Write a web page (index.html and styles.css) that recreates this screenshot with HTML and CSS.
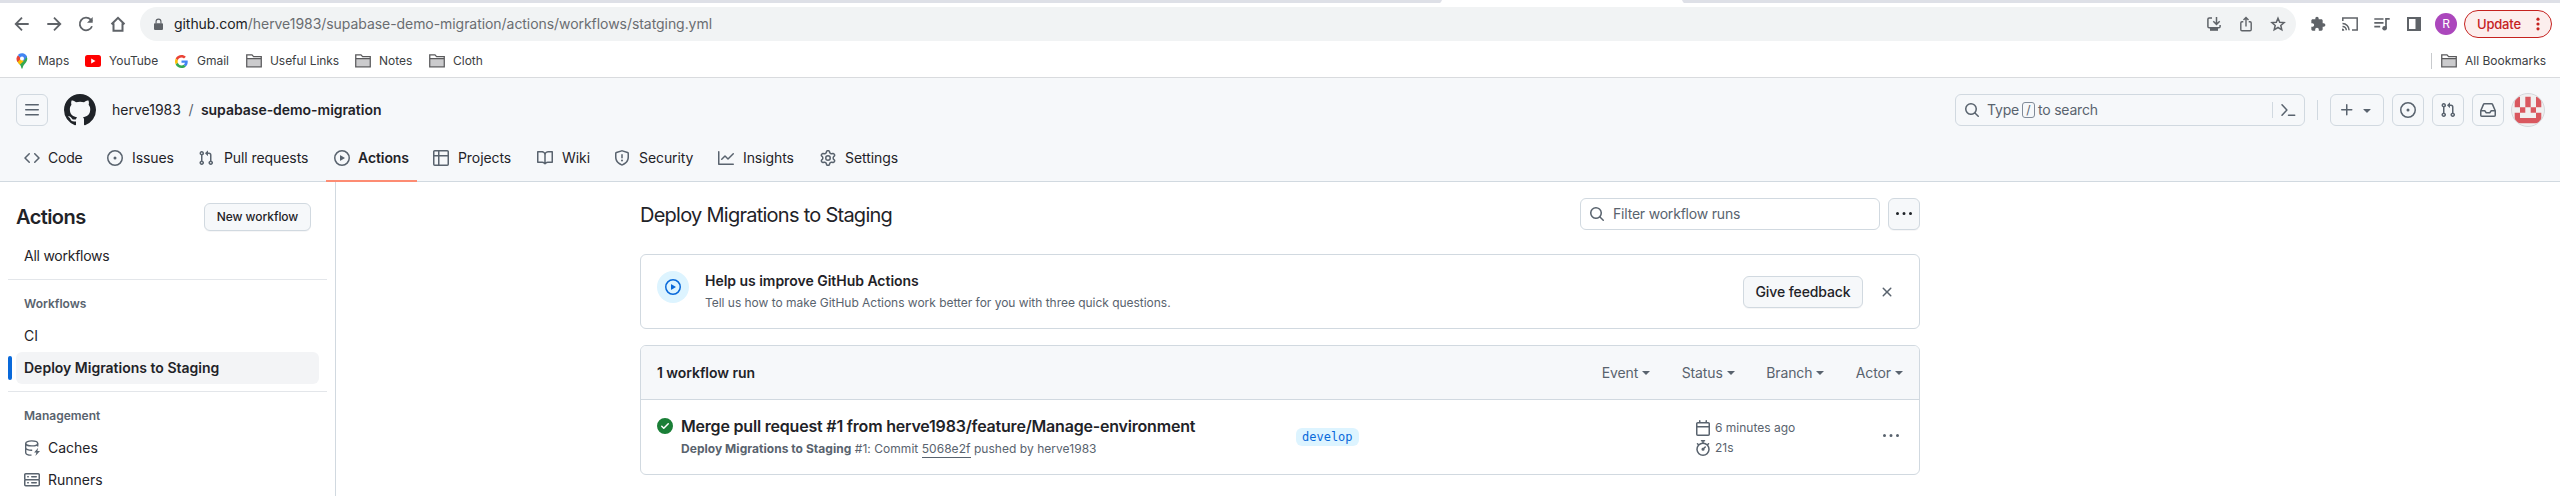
FILE: index.html
```
<!DOCTYPE html>
<html lang="en">
<head>
<meta charset="utf-8">
<title>Deploy Migrations to Staging · Workflow runs</title>
<link rel="stylesheet" href="styles.css">
</head>
<body>
<svg class="sprite" aria-hidden="true">
  <symbol id="issue" viewBox="0 0 16 16"><path d="M8 9.5a1.5 1.5 0 1 0 0-3 1.5 1.5 0 0 0 0 3Z"/><path d="M8 0a8 8 0 1 1 0 16A8 8 0 0 1 8 0ZM1.5 8a6.5 6.5 0 1 0 13 0 6.5 6.5 0 0 0-13 0Z"/></symbol>
  <symbol id="pull" viewBox="0 0 16 16"><path d="M1.5 3.25a2.25 2.25 0 1 1 3 2.122v5.256a2.251 2.251 0 1 1-1.5 0V5.372A2.25 2.25 0 0 1 1.5 3.25Zm5.677-.177L9.573.677A.25.25 0 0 1 10 .854V2.5h1A2.5 2.5 0 0 1 13.5 5v5.628a2.251 2.251 0 1 1-1.5 0V5a1 1 0 0 0-1-1h-1v1.646a.25.25 0 0 1-.427.177L7.177 3.427a.25.25 0 0 1 0-.354ZM3.75 2.5a.75.75 0 1 0 0 1.5.75.75 0 0 0 0-1.5Zm0 9.5a.75.75 0 1 0 0 1.5.75.75 0 0 0 0-1.5Zm8.25.75a.75.75 0 1 0 1.5 0 .75.75 0 0 0-1.5 0Z"/></symbol>
  <symbol id="play" viewBox="0 0 16 16"><path d="M8 0a8 8 0 1 1 0 16A8 8 0 0 1 8 0ZM1.5 8a6.5 6.5 0 1 0 13 0 6.5 6.5 0 0 0-13 0Zm4.879-2.773 4.264 2.559a.25.25 0 0 1 0 .428l-4.264 2.559A.25.25 0 0 1 6 10.559V5.442a.25.25 0 0 1 .379-.215Z"/></symbol>
  <symbol id="search" viewBox="0 0 16 16"><path d="M10.68 11.74a6 6 0 0 1-7.922-8.982 6 6 0 0 1 8.982 7.922l3.04 3.04a.749.749 0 0 1-.326 1.275.749.749 0 0 1-.734-.215ZM11.5 7a4.499 4.499 0 1 0-8.997 0A4.499 4.499 0 0 0 11.5 7Z"/></symbol>
  <symbol id="caret" viewBox="0 0 16 16"><path d="m4.427 7.427 3.396 3.396a.25.25 0 0 0 .354 0l3.396-3.396A.25.25 0 0 0 11.396 7H4.604a.25.25 0 0 0-.177.427Z"/></symbol>
  <symbol id="kebab" viewBox="0 0 16 16"><path d="M8 9a1.5 1.5 0 1 0 0-3 1.5 1.5 0 0 0 0 3ZM1.5 9a1.5 1.5 0 1 0 0-3 1.5 1.5 0 0 0 0 3Zm13 0a1.5 1.5 0 1 0 0-3 1.5 1.5 0 0 0 0 3Z"/></symbol>
  <symbol id="folder" viewBox="0 0 16 14"><path d="M1.2 4.5h13.6v8H1.200Z" fill="#cbcbcd"/><path d="M.75 12.9V.9H6l1.600 1.700h7.650V12.900ZM.8 4.600h14.400" fill="none" stroke="#5a5a5c" stroke-width="1.300"/></symbol>
</svg>

<div class="tabstrip"><span class="active-tab"></span></div>

<div class="toolbar">
  <svg class="nav-ico" viewBox="0 0 16 16"><path d="M14.700 8H2M8 1.700 1.700 8 8 14.300"/></svg>
  <svg class="nav-ico" viewBox="0 0 16 16"><path d="M1.300 8H14M8 1.700 14.300 8 8 14.300"/></svg>
  <svg class="nav-ico" viewBox="0 0 16 16"><path d="M14 10.200A6.300 6.300 0 1 1 12.700 3.700L14 5.300"/><path d="M14.700 1v5.700H9Z" class="solid"/></svg>
  <svg class="nav-ico" viewBox="0 0 16 16"><path d="M1.500 8.300 8 1.800l6.500 6.500M3.500 7.300v7.500h9V7.300" stroke-width="2"/></svg>
  <div class="omnibox">
    <svg class="lock" viewBox="0 0 10 14"><path d="M1 5.500h8a1 1 0 0 1 1 1V12a1.200 1.200 0 0 1-1.200 1.200H1.200A1.200 1.200 0 0 1 0 12V6.500a1 1 0 0 1 1-1Z"/><path d="M2.300 6V3.700a2.700 2.700 0 0 1 5.400 0V6" fill="none" stroke="#5f6368" stroke-width="1.300"/></svg>
    <span class="url"><b>github.com</b>/herve1983/supabase-demo-migration/actions/workflows/statging.yml</span>
    <svg class="omni-ico" viewBox="0 0 16 16"><path d="M6 2H3.200Q1.900 2 1.900 3.300v7.200q0 1.300 1.300 1.300h9.600q1.300 0 1.300-1.300V9M10.500 1v6.800M7.300 5.300l3.200 3.200 3.200-3.200" stroke-width="1.500"/><path d="M4 12h8v2.800H4Z" class="solid"/></svg>
    <svg class="omni-ico" viewBox="0 0 16 16"><path d="M5.300 5.800H4q-1.200 0-1.200 1.200v6.500q0 1.200 1.200 1.200h8q1.200 0 1.200-1.200V7q0-1.200-1.200-1.200h-1.300M8 10.500V1.800M5.500 4 8 1.500 10.500 4" stroke-width="1.400"/></svg>
    <svg class="omni-ico" viewBox="0 0 16 16"><path d="m8 2.200 1.700 4 4.400.400-3.300 2.900 1 4.300L8 11.500l-3.800 2.300 1-4.300-3.300-2.900 4.400-.400Z" stroke-width="1.500"/></svg>
  </div>
  <svg class="ext" viewBox="0 0 24 24"><path d="M20.500 11H19V7c0-1.100-.9-2-2-2h-4V3.500C13 2.120 11.880 1 10.500 1S8 2.120 8 3.500V5H4c-1.100 0-1.990.9-1.990 2v3.800H3.500c1.490 0 2.700 1.210 2.700 2.700s-1.210 2.700-2.700 2.700H2V20c0 1.100.9 2 2 2h3.800v-1.500c0-1.490 1.210-2.700 2.700-2.700 1.490 0 2.700 1.210 2.700 2.700V22H17c1.100 0 2-.9 2-2v-4h1.500c1.380 0 2.500-1.120 2.500-2.500S21.880 11 20.500 11z"/></svg>
  <svg class="ext" viewBox="0 0 16 16"><path d="M.8 5V2h14.400v12H10M.5 7.600a6.600 6.600 0 0 1 6.600 6.600M.5 10.400a3.800 3.800 0 0 1 3.800 3.800" fill="none" stroke="#5f6368" stroke-width="1.500"/><path d="M0 12.500a2.300 2.300 0 0 1 2.300 2.300H0Z"/></svg>
  <svg class="ext" viewBox="0 0 16 16"><path d="M.3 3h9.200M.3 6.800h9.200M.3 10.600h5.900M12 12.300V2.800h3.700" fill="none" stroke="#5f6368" stroke-width="1.700"/><circle cx="10.600" cy="12.200" r="2.300"/></svg>
  <svg class="ext" viewBox="0 0 16 16"><path fill-rule="evenodd" d="M1 1h14v14H1ZM3 3v10h6.500V3Z"/></svg>
  <span class="profile">R</span>
  <span class="update"><span>Update</span><svg viewBox="0 0 4 14"><circle cx="2" cy="2.200" r="1.600"/><circle cx="2" cy="7" r="1.600"/><circle cx="2" cy="11.800" r="1.600"/></svg></span>
</div>

<div class="bookmarks">
  <a class="bm bm-maps"><svg viewBox="0 0 16 16" width="16" height="16"><path fill="#34a853" d="M3.300 8.500C5 11 7 12 7.300 14.700c.2 1.500 1.200 1.500 1.400 0C9 11.500 13.300 9.500 13.300 5.400L12.600 3Z"/><path fill="#fbbc04" d="m3.300 8.500 3-4 4 3-4.500 4.300C5 10.900 4 9.800 3.300 8.500Z"/><path fill="#ea4335" d="M4 2.200 7.500 5 3.500 9A5.600 5.600 0 0 1 4 2.200Z"/><path fill="#4285f4" d="M4 2.100A5.300 5.300 0 0 1 13 3.800L9.500 8 6.300 5Z"/><circle cx="8" cy="5.500" r="2" fill="#fff"/></svg><span>Maps</span></a>
  <a class="bm bm-yt"><svg viewBox="0 0 16 12" width="16" height="12"><rect width="16" height="12" rx="2.500" fill="#f00"/><path fill="#fff" d="m6.200 3.500 4.300 2.500-4.300 2.500Z"/></svg><span>YouTube</span></a>
  <a class="bm bm-gmail"><svg viewBox="0 0 48 48" width="13" height="13"><path fill="#EA4335" d="M24 9.500c3.540 0 6.710 1.220 9.210 3.600l6.850-6.850C35.900 2.380 30.470 0 24 0 14.620 0 6.510 5.380 2.560 13.220l7.980 6.190C12.430 13.720 17.740 9.500 24 9.500z"/><path fill="#4285F4" d="M46.980 24.550c0-1.570-.15-3.090-.38-4.550H24v9.020h12.940c-.58 2.960-2.260 5.480-4.780 7.180l7.730 6c4.510-4.180 7.090-10.360 7.090-17.650z"/><path fill="#FBBC05" d="M10.530 28.590c-.48-1.450-.76-2.990-.76-4.590s.27-3.140.76-4.590l-7.980-6.190C.92 16.460 0 20.120 0 24c0 3.880.92 7.540 2.560 10.780l7.970-6.190z"/><path fill="#34A853" d="M24 48c6.480 0 11.930-2.130 15.890-5.810l-7.730-6c-2.150 1.450-4.920 2.300-8.160 2.300-6.260 0-11.570-4.220-13.470-9.910l-7.980 6.190C6.510 42.620 14.620 48 24 48z"/></svg><span>Gmail</span></a>
  <a class="bm bm-links"><svg width="16" height="14"><use href="#folder"/></svg><span>Useful Links</span></a>
  <a class="bm bm-notes"><svg width="16" height="14"><use href="#folder"/></svg><span>Notes</span></a>
  <a class="bm bm-cloth"><svg width="16" height="14"><use href="#folder"/></svg><span>Cloth</span></a>
  <a class="bm bm-all"><svg width="16" height="14"><use href="#folder"/></svg><span>All Bookmarks</span></a>
</div>

<header class="gh-header">
  <div class="gh-top">
    <span class="btn-sq"><svg class="oct" viewBox="0 0 16 16"><path d="M1 2.750A.75.75 0 0 1 1.750 2h12.500a.75.75 0 0 1 0 1.500H1.750A.75.75 0 0 1 1 2.750Zm0 5A.75.75 0 0 1 1.750 7h12.500a.75.75 0 0 1 0 1.500H1.750A.75.75 0 0 1 1 7.750ZM1.750 12h12.500a.75.75 0 0 1 0 1.500H1.750a.75.75 0 0 1 0-1.500Z"/></svg></span>
    <svg class="mark" viewBox="0 0 16 16"><path d="M8 0c4.420 0 8 3.580 8 8a8.013 8.013 0 0 1-5.450 7.590c-.4.080-.55-.17-.55-.38 0-.27.010-1.130.010-2.200 0-.75-.25-1.230-.54-1.480 1.780-.2 3.650-.88 3.650-3.950 0-.88-.31-1.590-.82-2.150.080-.2.360-1.020-.080-2.120 0 0-.67-.22-2.200.82-.64-.18-1.320-.27-2-.27-.68 0-1.360.090-2 .27-1.530-1.030-2.200-.82-2.200-.82-.44 1.100-.16 1.920-.080 2.120-.51.560-.82 1.280-.82 2.150 0 3.060 1.860 3.750 3.640 3.950-.23.2-.44.550-.51 1.070-.46.210-1.610.550-2.330-.66-.15-.24-.6-.83-1.230-.82-.67.010-.27.380.010.530.340.190.730.9.820 1.130.160.450.680 1.310 2.690.940 0 .670.010 1.300.010 1.490 0 .210-.15.450-.55.380A7.995 7.995 0 0 1 0 8c0-4.420 3.580-8 8-8Z"/></svg>
    <span class="owner">herve1983</span><span class="slash">/</span><span class="repo">supabase-demo-migration</span>
    <div class="gh-search">
      <svg class="oct"><use href="#search"/></svg>
      <span class="hint">Type</span><kbd>/</kbd><span class="hint">to search</span>
      <span class="cmd"><svg class="oct" viewBox="0 0 16 16"><path d="M2 2.700 6.900 8 2 13.300M8.500 13.200h6.200" fill="none" stroke="#59636e" stroke-width="1.500" stroke-linecap="round" stroke-linejoin="round"/></svg></span>
    </div>
    <span class="vline"></span>
    <span class="btn-sq plus"><svg class="oct" viewBox="0 0 16 16"><path d="M7.750 2a.75.75 0 0 1 .75.75V7h4.250a.75.75 0 0 1 0 1.500H8.500v4.250a.75.75 0 0 1-1.500 0V8.500H2.750a.75.75 0 0 1 0-1.500H7V2.750A.75.75 0 0 1 7.750 2Z"/></svg><svg class="oct"><use href="#caret"/></svg></span>
    <span class="btn-sq"><svg class="oct"><use href="#issue"/></svg></span>
    <span class="btn-sq"><svg class="oct"><use href="#pull"/></svg></span>
    <span class="btn-sq"><svg class="oct" viewBox="0 0 16 16"><path d="M2.800 2.060A1.750 1.750 0 0 1 4.410 1h7.180c.7 0 1.333.417 1.610 1.060l2.740 6.395c.04.093.060.194.060.295v4.500A1.750 1.750 0 0 1 14.250 15H1.750A1.750 1.750 0 0 1 0 13.250v-4.500c0-.101.020-.202.060-.295Zm1.610.44a.25.25 0 0 0-.23.152L1.887 8H4.750a.75.75 0 0 1 .6.300L6.625 10h2.750l1.275-1.700a.75.75 0 0 1 .6-.300h2.863L11.820 2.652a.25.25 0 0 0-.23-.152Zm10.090 7h-2.875l-1.275 1.700a.75.75 0 0 1-.6.300h-3.500a.75.75 0 0 1-.6-.300L4.375 9.500H1.500v3.750c0 .138.112.25.25.25h12.500a.25.25 0 0 0 .25-.25Z"/></svg></span>
    <svg class="avatar" viewBox="0 0 34 34"><circle cx="17" cy="17" r="16.500" fill="#f0f0f0" stroke="#d5d8dc"/><clipPath id="round"><circle cx="17" cy="17" r="16"/></clipPath><path clip-path="url(#round)" fill="#d9585f" d="M3.700 3.700H9v10.600H3.700ZM14.300 3.700h5.400v10.600h-5.400ZM25 3.700h5.300v10.600H25ZM9 14.300h5.300v5.400H9ZM19.700 14.300H25v5.400h-5.300ZM3.700 19.700H9V25h16v-5.300h5.300v10.600H3.700Z"/></svg>
  </div>
  <nav class="gh-nav">
    <a class="w-code"><svg class="oct" viewBox="0 0 16 16"><path d="m11.280 3.220 4.250 4.250a.75.75 0 0 1 0 1.060l-4.250 4.250a.749.749 0 0 1-1.275-.326.749.749 0 0 1 .215-.734L13.940 8l-3.720-3.720a.749.749 0 0 1 .326-1.275.749.749 0 0 1 .734.215Zm-6.560 0a.751.751 0 0 1 1.042.018.751.751 0 0 1 .018 1.042L2.060 8l3.720 3.720a.749.749 0 0 1-.326 1.275.749.749 0 0 1-.734-.215L.47 8.530a.75.75 0 0 1 0-1.060Z"/></svg><span>Code</span></a>
    <a class="w-issues"><svg class="oct"><use href="#issue"/></svg><span>Issues</span></a>
    <a class="w-pulls"><svg class="oct"><use href="#pull"/></svg><span>Pull requests</span></a>
    <a class="w-actions current"><svg class="oct"><use href="#play"/></svg><span>Actions</span></a>
    <a class="w-projects"><svg class="oct" viewBox="0 0 16 16"><path d="M0 1.750C0 .784.784 0 1.750 0h12.500C15.216 0 16 .784 16 1.750v12.500A1.750 1.750 0 0 1 14.250 16H1.750A1.750 1.750 0 0 1 0 14.250ZM6.500 6.500v8h7.750a.25.25 0 0 0 .25-.25V6.500Zm8-1.500V1.750a.25.25 0 0 0-.25-.25H6.500V5Zm-13 1.500v7.750c0 .138.112.25.25.25H5v-8ZM5 5V1.500H1.750a.25.25 0 0 0-.25.25V5Z"/></svg><span>Projects</span></a>
    <a class="w-wiki"><svg class="oct" viewBox="0 0 16 16"><path d="M0 1.750A.75.75 0 0 1 .75 1h4.253c1.227 0 2.317.590 3 1.501A3.743 3.743 0 0 1 11.006 1h4.245a.75.75 0 0 1 .75.75v10.500a.75.75 0 0 1-.75.75h-4.507a2.250 2.250 0 0 0-1.591.659l-.622.621a.75.75 0 0 1-1.060 0l-.622-.621A2.250 2.250 0 0 0 5.258 13H.75a.75.75 0 0 1-.75-.75Zm7.251 10.324.004-5.073-.002-2.253A2.250 2.250 0 0 0 5.003 2.500H1.500v9h3.757a3.750 3.750 0 0 1 1.994.574ZM8.755 4.750l-.004 7.322a3.752 3.752 0 0 1 1.992-.572H14.500v-9h-3.495a2.250 2.250 0 0 0-2.250 2.250Z"/></svg><span>Wiki</span></a>
    <a class="w-security"><svg class="oct" viewBox="0 0 16 16"><path d="M7.467.133a1.748 1.748 0 0 1 1.066 0l5.250 1.680A1.750 1.750 0 0 1 15 3.480V7c0 1.566-.32 3.182-1.303 4.682-.983 1.498-2.585 2.813-5.032 3.855a1.697 1.697 0 0 1-1.330 0c-2.447-1.042-4.049-2.357-5.032-3.855C1.320 10.182 1 8.566 1 7V3.480a1.750 1.750 0 0 1 1.217-1.667Zm.610 1.429a.25.25 0 0 0-.153 0l-5.250 1.680a.25.25 0 0 0-.174.238V7c0 1.358.275 2.666 1.057 3.860.784 1.194 2.121 2.340 4.366 3.297a.196.196 0 0 0 .154 0c2.245-.956 3.582-2.104 4.366-3.298C13.225 9.666 13.500 8.360 13.500 7V3.480a.251.251 0 0 0-.174-.237l-5.250-1.680ZM8.750 4.750v3a.75.75 0 0 1-1.500 0v-3a.75.75 0 0 1 1.500 0ZM9 10.500a1 1 0 1 1-2 0 1 1 0 0 1 2 0Z"/></svg><span>Security</span></a>
    <a class="w-insights"><svg class="oct" viewBox="0 0 16 16"><path d="M1.500 1.750V13.500h13.750a.75.75 0 0 1 0 1.500H.75a.75.75 0 0 1-.75-.75V1.750a.75.75 0 0 1 1.500 0Zm14.280 2.530-5.250 5.250a.75.75 0 0 1-1.060 0L7 7.060 4.280 9.780a.751.751 0 0 1-1.042-.018.751.751 0 0 1-.018-1.042l3.250-3.250a.75.75 0 0 1 1.060 0L10 7.940l4.720-4.720a.751.751 0 0 1 1.042.018.751.751 0 0 1 .018 1.042Z"/></svg><span>Insights</span></a>
    <a class="w-settings"><svg class="oct" viewBox="0 0 16 16"><path d="M8 0a8.200 8.200 0 0 1 .701.031C9.444.095 9.990.645 10.160 1.290l.288 1.107c.018.066.079.158.212.224.231.114.454.243.668.386.123.082.233.090.299.071l1.103-.303c.644-.176 1.392.021 1.820.63.270.385.506.792.704 1.218.315.675.111 1.422-.364 1.891l-.814.806c-.049.048-.098.147-.088.294.016.257.016.515 0 .772-.010.147.038.246.088.294l.814.806c.475.469.679 1.216.364 1.891a7.977 7.977 0 0 1-.704 1.217c-.428.610-1.176.807-1.820.630l-1.102-.302c-.067-.019-.177-.011-.300.071a5.909 5.909 0 0 1-.668.386c-.133.066-.194.158-.211.224l-.290 1.106c-.168.646-.715 1.196-1.458 1.260a8.006 8.006 0 0 1-1.402 0c-.743-.064-1.289-.614-1.458-1.260l-.289-1.106c-.018-.066-.079-.158-.212-.224a5.738 5.738 0 0 1-.668-.386c-.123-.082-.233-.090-.299-.071l-1.103.303c-.644.176-1.392-.021-1.820-.630a8.120 8.120 0 0 1-.704-1.218c-.315-.675-.111-1.422.363-1.891l.815-.806c.050-.048.098-.147.088-.294a6.214 6.214 0 0 1 0-.772c.010-.147-.038-.246-.088-.294l-.815-.806C.635 6.045.431 5.298.746 4.623a7.920 7.920 0 0 1 .704-1.217c.428-.610 1.176-.807 1.820-.630l1.102.302c.067.019.177.011.300-.071.214-.143.437-.272.668-.386.133-.066.194-.158.211-.224l.290-1.106C6.009.645 6.556.095 7.299.030 7.530.010 7.764 0 8 0Zm-.571 1.525c-.036.003-.108.036-.137.146l-.289 1.105c-.147.561-.549.967-.998 1.189-.173.086-.340.183-.500.290-.417.278-.970.423-1.529.270l-1.103-.303c-.109-.030-.175.016-.195.045-.220.312-.412.644-.573.990-.014.031-.021.110.059.190l.815.806c.411.406.562.957.530 1.456a4.709 4.709 0 0 0 0 .582c.032.499-.119 1.050-.530 1.456l-.815.806c-.081.080-.073.159-.059.190.162.346.353.677.573.989.020.030.085.076.195.046l1.102-.303c.560-.153 1.113-.008 1.530.270.161.107.328.204.501.290.447.222.850.629.997 1.189l.289 1.105c.029.109.101.143.137.146a6.600 6.600 0 0 0 1.142 0c.036-.003.108-.036.137-.146l.289-1.105c.147-.561.549-.967.998-1.189.173-.086.340-.183.500-.290.417-.278.970-.423 1.529-.270l1.103.303c.109.029.175-.016.195-.045.220-.313.411-.644.573-.990.014-.031.021-.110-.059-.190l-.815-.806c-.411-.406-.562-.957-.530-1.456a4.709 4.709 0 0 0 0-.582c-.032-.499.119-1.050.530-1.456l.815-.806c.081-.080.073-.159.059-.190a6.464 6.464 0 0 0-.573-.989c-.020-.030-.085-.076-.195-.046l-1.102.303c-.560.153-1.113.008-1.530-.270a4.440 4.440 0 0 0-.501-.290c-.447-.222-.850-.629-.997-1.189l-.289-1.105c-.029-.110-.101-.143-.137-.146a6.600 6.600 0 0 0-1.142 0ZM11 8a3 3 0 1 1-6 0 3 3 0 0 1 6 0ZM9.500 8a1.500 1.500 0 1 0-3.001.001A1.500 1.500 0 0 0 9.500 8Z"/></svg><span>Settings</span></a>
  </nav>
</header>

<div class="page">
  <aside class="side">
    <div class="side-head"><h2>Actions</h2><span class="btn small">New workflow</span></div>
    <a class="item all">All workflows</a>
    <hr>
    <h3>Workflows</h3>
    <a class="item ci">CI</a>
    <a class="item selected">Deploy Migrations to Staging</a>
    <hr class="second">
    <h3>Management</h3>
    <a class="item"><svg class="oct" viewBox="0 0 16 16"><g fill="none" stroke="#59636e" stroke-width="1.400"><ellipse cx="7.700" cy="3.400" rx="6" ry="2.500"/><path d="M1.700 3.400v9c0 1.400 2.300 2.700 5.800 2.700M13.700 3.400v3.100M1.700 7.800c0 1.500 2.900 2.700 6.500 2.500"/></g><path d="m14.200 7.700-4.100 4.800h2.300l-1 3.500 4.600-4.900h-2.600Z"/></svg><span>Caches</span></a>
    <a class="item"><svg class="oct" viewBox="0 0 16 16"><path d="M1.750 1h12.500c.966 0 1.750.784 1.750 1.750v4c0 .372-.116.717-.314 1 .198.283.314.628.314 1v4a1.750 1.750 0 0 1-1.750 1.750H1.750A1.750 1.750 0 0 1 0 12.750v-4c0-.358.109-.707.314-1a1.739 1.739 0 0 1-.314-1v-4C0 1.784.784 1 1.750 1ZM1.500 2.750v4c0 .138.112.25.25.25h12.500a.25.25 0 0 0 .25-.25v-4a.25.25 0 0 0-.25-.25H1.750a.25.25 0 0 0-.25.25Zm.25 5.750a.25.25 0 0 0-.25.25v4c0 .138.112.25.25.25h12.500a.25.25 0 0 0 .25-.25v-4a.25.25 0 0 0-.25-.25ZM7 4.750A.75.75 0 0 1 7.750 4h4.500a.75.75 0 0 1 0 1.500h-4.500A.75.75 0 0 1 7 4.750ZM7.750 10h4.500a.75.75 0 0 1 0 1.500h-4.500a.75.75 0 0 1 0-1.500ZM3 4.750A.75.75 0 0 1 3.750 4h.5a.75.75 0 0 1 0 1.500h-.5A.75.75 0 0 1 3 4.750ZM3.750 10h.5a.75.75 0 0 1 0 1.500h-.5a.75.75 0 0 1 0-1.500Z"/></svg><span>Runners</span></a>
  </aside>
  <main class="main">
    <div class="title-row">
      <h1>Deploy Migrations to Staging</h1>
      <div class="filter"><svg class="oct"><use href="#search"/></svg><span>Filter workflow runs</span></div>
      <span class="btn more"><svg class="oct"><use href="#kebab"/></svg></span>
    </div>
    <section class="box notice">
      <span class="play-badge"><svg class="oct"><use href="#play"/></svg></span>
      <div class="notice-text"><strong>Help us improve GitHub Actions</strong><p>Tell us how to make GitHub Actions work better for you with three quick questions.</p></div>
      <span class="btn feedback">Give feedback</span>
      <svg class="oct close" viewBox="0 0 16 16"><path d="M3.720 3.720a.75.75 0 0 1 1.060 0L8 6.940l3.220-3.220a.749.749 0 0 1 1.275.326.749.749 0 0 1-.215.734L9.060 8l3.220 3.220a.749.749 0 0 1-.326 1.275.749.749 0 0 1-.734-.215L8 9.060l-3.220 3.220a.751.751 0 0 1-1.042-.018.751.751 0 0 1-.018-1.042L6.940 8 3.720 4.780a.75.75 0 0 1 0-1.060Z"/></svg>
    </section>
    <section class="box runs">
      <div class="runs-head">
        <strong>1 workflow run</strong>
        <span class="dd">Event<i></i></span><span class="dd">Status<i></i></span><span class="dd">Branch<i></i></span><span class="dd">Actor<i></i></span>
      </div>
      <div class="run">
        <svg class="ok" viewBox="0 0 16 16"><path d="M8 16A8 8 0 1 1 8 0a8 8 0 0 1 0 16Zm3.780-9.720a.751.751 0 0 0-.018-1.042.751.751 0 0 0-1.042-.018L6.750 9.190 5.280 7.720a.751.751 0 0 0-1.042.018.751.751 0 0 0-.018 1.042l2 2a.75.75 0 0 0 1.060 0Z"/></svg>
        <div class="run-text">
          <a class="run-title">Merge pull request #1 from herve1983/feature/Manage-environment</a>
          <p><b>Deploy Migrations to Staging</b> #1: Commit <u>5068e2f</u> pushed by herve1983</p>
        </div>
        <div class="branch-col"><span class="branch">develop</span></div>
        <div class="meta">
          <div><svg class="oct" viewBox="0 0 16 16"><path d="M4.750 0a.75.75 0 0 1 .75.75V2h5V.75a.75.75 0 0 1 1.500 0V2h1.250c.966 0 1.750.784 1.750 1.750v10.500A1.750 1.750 0 0 1 13.250 16H2.750A1.750 1.750 0 0 1 1 14.250V3.750C1 2.784 1.784 2 2.750 2H4V.75A.75.75 0 0 1 4.750 0ZM2.500 7.500v6.750c0 .138.112.25.25.25h10.500a.25.25 0 0 0 .25-.25V7.500Zm10.750-4H2.750a.25.25 0 0 0-.25.25V6h11V3.750a.25.25 0 0 0-.25-.25Z"/></svg><span>6 minutes ago</span></div>
          <div><svg class="oct" viewBox="0 0 16 16"><path d="M5.750.75A.75.75 0 0 1 6.500 0h3a.75.75 0 0 1 0 1.500h-.75v1l-.001.041a6.724 6.724 0 0 1 3.464 1.435l.007-.006.75-.75a.749.749 0 0 1 1.275.326.749.749 0 0 1-.215.734l-.75.75-.006.007a6.750 6.750 0 1 1-10.548 0L2.720 5.030l-.75-.75a.751.751 0 0 1 .018-1.042.751.751 0 0 1 1.042-.018l.75.75.007.006A6.720 6.720 0 0 1 7.250 2.541V1.500H6.500a.75.75 0 0 1-.75-.75ZM8 14.500a5.250 5.250 0 1 0-.001-10.501A5.250 5.250 0 0 0 8 14.500Zm.389-6.700 1.330-1.330a.75.75 0 1 1 1.061 1.060L9.450 8.861A1.503 1.503 0 0 1 8 10.750a1.499 1.499 0 1 1 .389-2.950Z"/></svg><span>21s</span></div>
        </div>
        <svg class="oct run-more"><use href="#kebab"/></svg>
      </div>
    </section>
  </main>
</div>
</body>
</html>
```
FILE: styles.css
```
* { box-sizing: border-box; }
body { margin: 0; width: 2560px; height: 496px; overflow: hidden; background: #fff; color: #1f2328; font: 14px/20px Inter, "Liberation Sans", sans-serif; }
h1, h2, h3, p { margin: 0; }
svg { display: block; flex: none; }
.sprite { position: absolute; width: 0; height: 0; }
.oct { width: 16px; height: 16px; fill: #59636e; }

/* Browser chrome */
.tabstrip { height: 3px; background: #dee0e7; padding-left: 1440px; }
.active-tab { display: block; width: 244px; height: 3px; background: #fff; clip-path: polygon(2px 0, 242px 0, 243px 2px, 244px 3px, 0 3px, 1px 2px); }
.toolbar { display: flex; align-items: center; height: 42px; padding-left: 14px; }
.nav-ico { width: 16px; height: 16px; margin-right: 16px; fill: none; stroke: #5f6368; stroke-width: 1.8; }
.nav-ico:nth-child(4) { margin-right: 14px; }
.solid { fill: #5f6368; stroke: none; }
.omnibox { display: flex; align-items: center; width: 2156px; height: 34px; padding: 0 10px 0 14px; border-radius: 17px; background: #f1f3f4; }
.lock { width: 9px; height: 13px; fill: #5f6368; }
.url { margin: 0 auto 0 11px; color: #6a6d71; letter-spacing: -0.055px; white-space: nowrap; }
.url b { font-weight: 400; color: #202124; }
.omni-ico { width: 16px; height: 16px; margin-left: 16px; fill: none; stroke: #5f6368; }
.ext { width: 16px; height: 16px; margin-left: 16px; fill: #5f6368; }
.omnibox + .ext { margin-left: 14px; }
.profile { width: 22px; height: 22px; margin-left: 13px; border-radius: 50%; background: #ab47bc; color: #fff; font-size: 12px; line-height: 22px; text-align: center; }
.update { display: flex; align-items: center; width: 88px; height: 28px; margin-left: 7px; padding-left: 12px; border: 1px solid #c5221f; border-radius: 14px; background: #fceeed; color: #c5221f; font-weight: 500; font-size: 13px; letter-spacing: -0.2px; }
.update svg { width: 4px; height: 14px; margin-left: 15px; fill: #c5221f; }

.bookmarks { display: flex; align-items: center; height: 33px; border-bottom: 1px solid #d9dbde; color: #3c4043; font-size: 12px; }
.bm { display: flex; align-items: center; height: 32px; }
.bm span { white-space: nowrap; }
.bm-maps { width: 71px; padding-left: 14px; gap: 8px; }
.bm-yt { width: 90px; padding-left: 14px; gap: 8px; }
.bm-gmail { width: 69px; padding-left: 14px; gap: 9px; }
.bm-links { width: 109px; padding-left: 16px; gap: 8px; letter-spacing: -0.06px; }
.bm-notes { width: 74px; padding-left: 16px; gap: 8px; }
.bm-cloth { padding-left: 16px; gap: 8px; }
.bm-all { width: 129px; height: 16px; margin-left: auto; padding-left: 9px; gap: 8px; border-left: 1px solid #c8cacd; }

/* Site header */
.gh-header { height: 104px; border-bottom: 1px solid #d1d9e0; background: #f6f8fa; }
.gh-top { display: flex; align-items: center; height: 64px; padding: 0 15px 0 16px; }
.btn-sq { display: flex; align-items: center; justify-content: center; width: 32px; height: 32px; border: 1px solid #d1d9e0; border-radius: 6px; }
.mark { width: 32px; height: 32px; margin: 0 16px; fill: #1f2328; }
.slash { width: 20px; text-align: center; color: #59636e; }
.repo { font-weight: 600; letter-spacing: -0.04px; }
.gh-search { display: flex; align-items: center; width: 350px; height: 32px; margin-left: auto; padding-left: 8px; border: 1px solid #d1d9e0; border-radius: 6px; color: #59636e; }
.gh-search .hint { margin-left: 7px; letter-spacing: -0.2px; }
.gh-search kbd { width: 13px; height: 16px; margin-left: 3px; border: 1px solid #818b98; border-radius: 3px; font: 12px/14px Inter, sans-serif; text-align: center; }
.gh-search kbd + .hint { margin-left: 3px; }
.cmd { height: 16px; margin: 0 8px 0 auto; padding-left: 7px; border-left: 1px solid #d1d9e0; }
.vline { width: 1px; height: 20px; margin: 0 12px; background: #d1d9e0; }
.gh-top .btn-sq ~ .btn-sq { margin-right: 8px; }
.gh-top .plus { width: 54px; gap: 4px; }
.avatar { width: 34px; height: 34px; margin-left: -1px; }
.gh-nav { display: flex; gap: 8px; height: 40px; padding-left: 16px; }
.gh-nav a { display: flex; align-items: center; gap: 9px; height: 40px; padding: 0 8px 8px; white-space: nowrap; letter-spacing: -0.08px; }
.gh-nav .w-code { width: 75px; gap: 8px; letter-spacing: -0.2px; }
.w-issues { width: 83px; }
.gh-nav .w-pulls { width: 128px; gap: 10px; }
.gh-nav .current { width: 91px; gap: 8px; padding-bottom: 6px; border-bottom: 2px solid #fd8c73; font-weight: 600; }
.w-projects { width: 96px; }
.w-wiki { width: 69px; }
.w-security { width: 96px; }
.w-insights { width: 94px; }

/* Sidebar */
.page { display: flex; height: 314px; }
.side { width: 336px; border-right: 1px solid #d1d9e0; }
.side-head { display: flex; align-items: center; justify-content: space-between; height: 28px; margin: 21px 24px 9px 16px; }
.side-head h2 { font-size: 20px; font-weight: 600; letter-spacing: -0.58px; }
.btn { display: flex; align-items: center; justify-content: center; border: 1px solid #d1d9e0; border-radius: 6px; background: #f6f8fa; font-weight: 500; box-shadow: 0 1px 0 rgba(31, 35, 40, .04); }
.small { width: 107px; height: 28px; font-size: 12px; letter-spacing: -0.06px; }
.item { position: relative; display: flex; align-items: center; gap: 8px; height: 32px; margin: 0 16px; padding-left: 8px; border-radius: 6px; }
.all { letter-spacing: -0.25px; }
.side hr { height: 1px; margin: 7px 8px 0; border: 0; background: #e3e6ea; }
.side h3 { height: 24px; margin: 12px 24px 4px; color: #59636e; font-size: 12px; line-height: 24px; font-weight: 600; }
.selected { background: #f3f4f6; font-weight: 600; }
.selected::before { content: ""; position: absolute; left: -8px; top: 4px; width: 4px; height: 24px; border-radius: 6px; background: #0969da; }

/* Main column */
.main { width: 1280px; margin-left: 304px; padding-top: 16px; }
.title-row { display: flex; align-items: center; height: 32px; margin-bottom: 24px; }
.title-row h1 { padding-top: 2px; margin-right: auto; font-size: 20px; font-weight: 400; letter-spacing: -0.74px; line-height: 30px; }
.filter { display: flex; align-items: center; gap: 8px; width: 300px; height: 32px; padding-left: 8px; border: 1px solid #d1d9e0; border-radius: 6px; color: #59636e; letter-spacing: -0.2px; }
.more { width: 32px; height: 32px; margin-left: 8px; }
.more .oct { fill: #1f2328; }
.box { border: 1px solid #d1d9e0; border-radius: 6px; }
.notice { display: flex; height: 75px; padding: 16px; margin-bottom: 16px; }
.play-badge { display: flex; align-items: center; justify-content: center; width: 32px; height: 32px; border-radius: 50%; background: #ddf4ff; }
.play-badge .oct { fill: #0969da; }
.notice-text { margin: 0 auto 0 16px; }
.notice-text strong { display: block; font-weight: 600; letter-spacing: -0.03px; }
.notice-text p { margin-top: 3px; color: #59636e; font-size: 12px; line-height: 18px; letter-spacing: -0.03px; }
.feedback { width: 120px; height: 32px; margin: 5px 16px 0 0; letter-spacing: -0.1px; }
.close { margin: 13px 8px 0 0; }
.runs { height: 130px; }
.runs-head { display: flex; align-items: center; height: 54px; padding: 0 16px; border-bottom: 1px solid #d1d9e0; border-radius: 5px 5px 0 0; background: #f6f8fa; }
.runs-head strong { margin-right: auto; font-weight: 600; letter-spacing: -0.05px; }
.dd { display: flex; align-items: center; gap: 4px; margin-left: 31.5px; color: #59636e; letter-spacing: -0.12px; }
.dd i { border: 4px solid transparent; border-top-color: #59636e; border-bottom: 0; }
.run { display: flex; padding: 16px 16px 0; }
.ok { width: 16px; height: 16px; margin-top: 2px; fill: #1a7f37; }
.run-text { width: 615px; margin-left: 8px; white-space: nowrap; }
.run-title { display: block; margin-top: -1px; font-size: 16px; line-height: 22px; font-weight: 600; letter-spacing: -0.2px; }
.run-text p { margin-top: 2px; color: #59636e; font-size: 12px; line-height: 20px; letter-spacing: 0.04px; }
.run-text u { border-bottom: 1px solid #59636e; text-decoration: none; padding-bottom: 1px; }
.branch-col { width: 399px; }
.branch { display: inline-block; height: 18px; margin-top: 12px; padding: 0 6px; border-radius: 6px; background: #ddf4ff; color: #0969da; font: 12px/18px "DejaVu Sans Mono", monospace; }
.meta { width: 188px; padding-top: 2px; color: #59636e; font-size: 12px; line-height: 20px; }
.meta div { display: flex; align-items: center; gap: 4px; height: 20px; }
.run-more { margin-top: 12px; }
```
